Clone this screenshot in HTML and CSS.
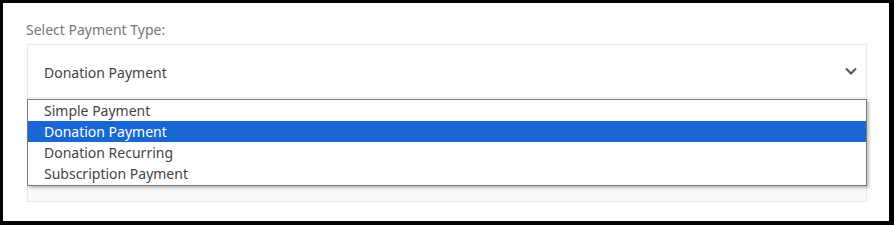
FILE: index.html
```html
<!DOCTYPE html>
<html lang="en">
<head>
    <meta charset="UTF-8">
    <meta name="viewport" content="width=device-width, initial-scale=1.0">
    <title>Select Payment Type</title>
    <link rel="stylesheet" href="styles.css">
</head>
<body>
    <div class="frame">
        <label class="field-label">Select Payment Type:</label>
        <div class="select-wrap">
            <div class="select">
                <span class="select-value">Donation Payment</span>
                <svg class="chevron" width="14" height="10" viewBox="0 0 14 10">
                    <path d="M2 2.5 L7 7.5 L12 2.5" fill="none" stroke="#555" stroke-width="2"/>
                </svg>
            </div>
            <ul class="options">
                <li>Simple Payment</li>
                <li class="selected">Donation Payment</li>
                <li>Donation Recurring</li>
                <li>Subscription Payment</li>
            </ul>
        </div>
    </div>
</body>
</html>
```

FILE: styles.css
```css
* {
    box-sizing: border-box;
    margin: 0;
    padding: 0;
}

html, body {
    height: 100%;
}

body {
    background-color: #000;
    padding: 3px 5px 4px 3px;
    font-family: "Noto Sans", "Open Sans", sans-serif;
    font-size: 14px;
}

.frame {
    background-color: #fff;
    height: 100%;
    padding: 17px 22px 0 23px;
}

.field-label {
    display: block;
    color: #777;
    line-height: 20px;
    margin-bottom: 4px;
}

.select-wrap {
    position: relative;
    margin-left: 1px;
    height: 158px;
    border: 1px solid #e8e9ef;
    background-color: #fafafa;
    box-shadow: 0 0 4px rgba(0, 0, 0, 0.04);
}

.select {
    display: flex;
    align-items: center;
    justify-content: space-between;
    height: 53px;
    padding: 0 8px 0 16px;
    background-color: #fff;
    border-bottom: 1px solid #ececec;
    color: #444;
}

.select-value {
    padding-top: 2px;
}

.options {
    list-style: none;
    position: absolute;
    top: 54px;
    left: -1px;
    right: -1px;
    background-color: #fff;
    border: 1px solid #7a7a7a;
    box-shadow: 2px 2px 3px rgba(0, 0, 0, 0.25);
    padding-bottom: 1px;
}

.options li {
    height: 21px;
    line-height: 21px;
    padding-left: 16px;
    color: #444;
}

.options li.selected {
    background-color: #1967d2;
    color: #fff;
}
```
